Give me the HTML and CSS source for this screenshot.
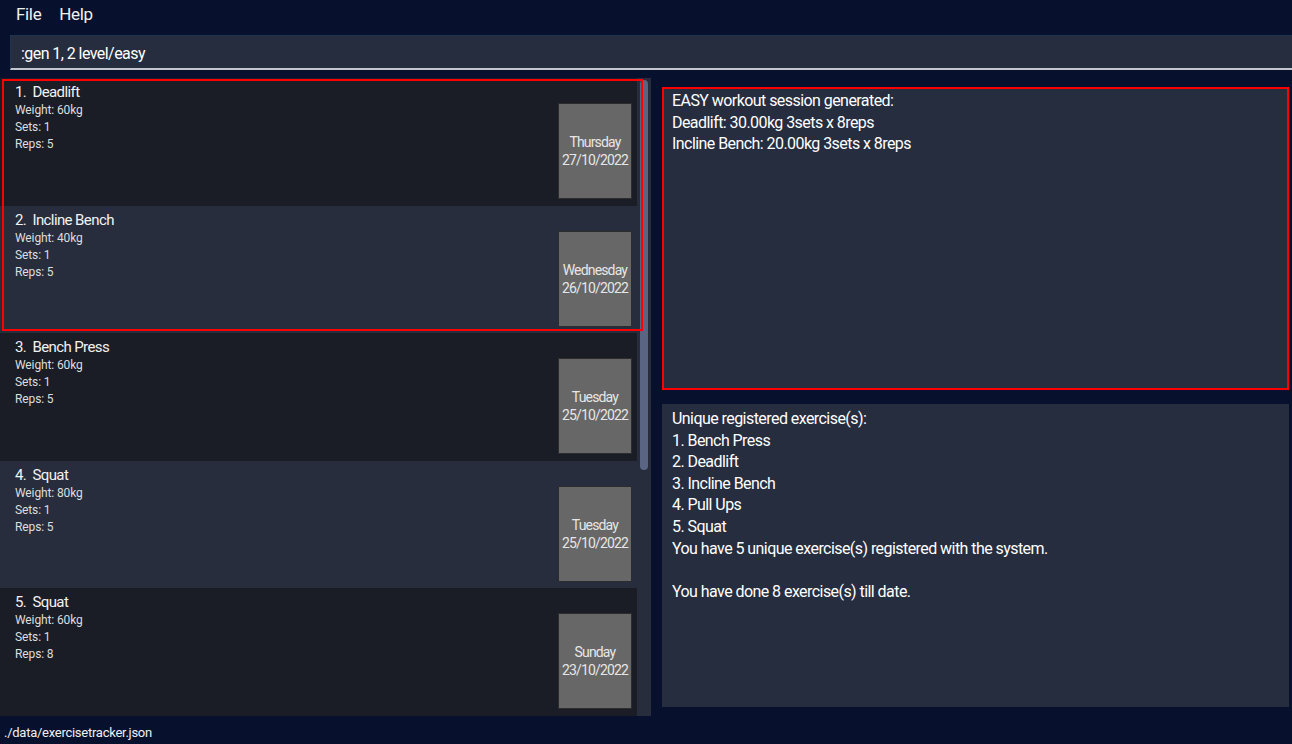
FILE: index.html
```html
<!DOCTYPE html>
<html lang="en">
<head>
<meta charset="utf-8">
<title>Exercise Tracker</title>
<link rel="stylesheet" href="styles.css">
</head>
<body>
<div class="app">
  <div class="menubar">
    <span class="menu-item">File</span>
    <span class="menu-item">Help</span>
  </div>
  <div class="command">:gen 1, 2 level/easy</div>
  <div class="main">
    <div class="left">
      <div class="list">
        <div class="card odd">
          <div class="info">
            <div class="title">1.&nbsp; Deadlift</div>
            <div class="detail">Weight: 60kg</div>
            <div class="detail">Sets: 1</div>
            <div class="detail">Reps: 5</div>
          </div>
          <div class="date">Thursday<br>27/10/2022</div>
        </div>
        <div class="card even">
          <div class="info">
            <div class="title">2.&nbsp; Incline Bench</div>
            <div class="detail">Weight: 40kg</div>
            <div class="detail">Sets: 1</div>
            <div class="detail">Reps: 5</div>
          </div>
          <div class="date">Wednesday<br>26/10/2022</div>
        </div>
        <div class="card odd">
          <div class="info">
            <div class="title">3.&nbsp; Bench Press</div>
            <div class="detail">Weight: 60kg</div>
            <div class="detail">Sets: 1</div>
            <div class="detail">Reps: 5</div>
          </div>
          <div class="date">Tuesday<br>25/10/2022</div>
        </div>
        <div class="card even">
          <div class="info">
            <div class="title">4.&nbsp; Squat</div>
            <div class="detail">Weight: 80kg</div>
            <div class="detail">Sets: 1</div>
            <div class="detail">Reps: 5</div>
          </div>
          <div class="date">Tuesday<br>25/10/2022</div>
        </div>
        <div class="card odd">
          <div class="info">
            <div class="title">5.&nbsp; Squat</div>
            <div class="detail">Weight: 60kg</div>
            <div class="detail">Sets: 1</div>
            <div class="detail">Reps: 8</div>
          </div>
          <div class="date">Sunday<br>23/10/2022</div>
        </div>
      </div>
      <div class="scrolltrack"><div class="thumb"></div></div>
      <div class="highlight"></div>
    </div>
    <div class="right">
      <div class="result">
        <div>EASY workout session generated:</div>
        <div>Deadlift: 30.00kg 3sets x 8reps</div>
        <div>Incline Bench: 20.00kg 3sets x 8reps</div>
      </div>
      <div class="stats">
        <div>Unique registered exercise(s):</div>
        <div>1. Bench Press</div>
        <div>2. Deadlift</div>
        <div>3. Incline Bench</div>
        <div>4. Pull Ups</div>
        <div>5. Squat</div>
        <div>You have 5 unique exercise(s) registered with the system.</div>
        <div>&nbsp;</div>
        <div>You have done 8 exercise(s) till date.</div>
      </div>
    </div>
  </div>
  <div class="status">./data/exercisetracker.json</div>
</div>
</body>
</html>
```
FILE: styles.css
```css
* { box-sizing: border-box; }
html, body {
  margin: 0;
  padding: 0;
  background: #07112e;
}
body {
  font-family: Roboto, "Liberation Sans", sans-serif;
  font-weight: 400;
  letter-spacing: -0.035em;
  color: #ffffff;
  width: 1292px;
  height: 744px;
  overflow: hidden;
}
.app {
  display: flex;
  flex-direction: column;
  height: 744px;
}
.menubar {
  height: 30px;
  display: flex;
  align-items: center;
  padding: 0 0 3px 16px;
  gap: 18px;
  font-size: 17px;
  letter-spacing: -0.02em;
  color: #f0f0f0;
}
.command {
  margin: 5px 0 0 10px;
  height: 35px;
  background: #262d3f;
  border-top: 1px solid #1d3350;
  border-left: 1px solid #1d3350;
  border-bottom: 2px solid #c3c6cd;
  padding: 3px 0 0 10px;
  display: flex;
  align-items: center;
  font-size: 16px;
  color: #ffffff;
}
.main {
  margin-top: 8px;
  height: 638px;
  display: flex;
  gap: 11px;
}
.left {
  position: relative;
  width: 651px;
  height: 638px;
  display: flex;
}
.list {
  width: 637px;
  display: flex;
  flex-direction: column;
}
.card {
  height: 127.6px;
  display: flex;
  justify-content: space-between;
  align-items: flex-start;
  padding: 4px 5px 0 15px;
}
.card.odd { background: #1a1d26; }
.card.even { background: #272d3c; }
.title {
  font-size: 15px;
  line-height: 20px;
  letter-spacing: -0.04em;
  color: #f2f2f2;
}
.detail {
  font-size: 12px;
  line-height: 17px;
  letter-spacing: -0.01em;
  color: #dedede;
}
.date {
  margin-top: 21px;
  height: 96px;
  padding: 0 3px;
  display: flex;
  align-items: center;
  justify-content: center;
  text-align: center;
  background: #676767;
  border: 1px solid #2c2c2c;
  font-size: 14px;
  line-height: 18px;
  letter-spacing: -0.06em;
  color: #e6e6e6;
}
.scrolltrack {
  width: 14px;
  background: #272d3d;
  padding: 2px 3px 2px 3px;
}
.thumb {
  height: 390px;
  background: #5a6584;
  border-radius: 4px;
}
.highlight {
  position: absolute;
  left: 2px;
  top: 1px;
  width: 641px;
  height: 252px;
  border: 2px solid #ff0000;
  pointer-events: none;
}
.right {
  width: 627px;
  display: flex;
  flex-direction: column;
}
.result {
  margin-top: 9px;
  height: 303px;
  background: #262d3f;
  border: 2px solid #ff0000;
  padding: 1px 8px;
  font-size: 16px;
  line-height: 21.6px;
}
.stats {
  margin-top: 14px;
  height: 303px;
  background: #262d3f;
  padding: 4px 10px;
  font-size: 16px;
  line-height: 21.6px;
}
.status {
  height: 28px;
  display: flex;
  align-items: center;
  padding: 4px 0 0 4px;
  font-size: 13px;
  letter-spacing: -0.02em;
  color: #f0f0f0;
}
```
